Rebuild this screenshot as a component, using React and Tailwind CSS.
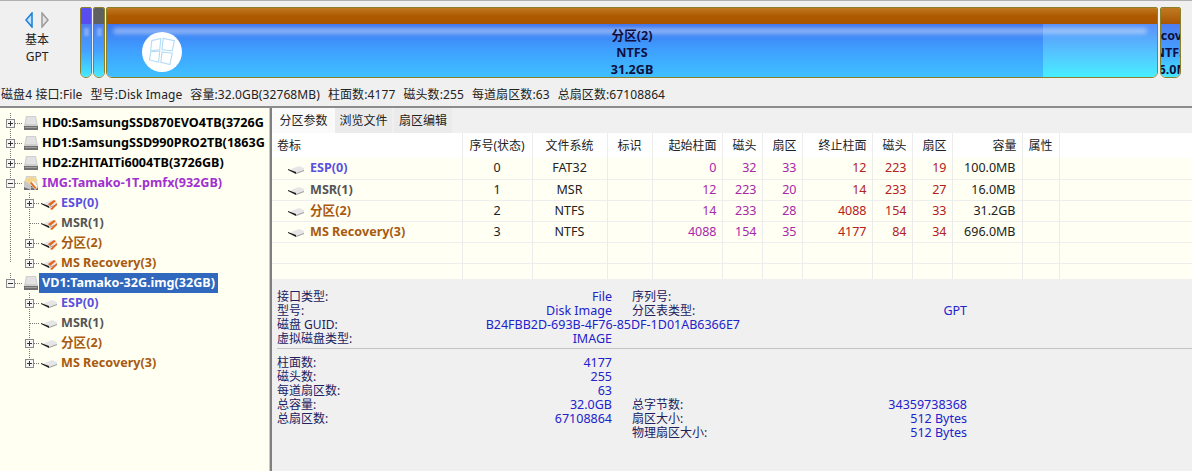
import React from "react";

const columns = [
  { label: "卷标", w: "w-[190px]", align: "text-left" },
  { label: "序号(状态)", w: "w-[70px]", align: "text-center" },
  { label: "文件系统", w: "w-[75px]", align: "text-center" },
  { label: "标识", w: "w-[45px]", align: "text-center" },
  { label: "起始柱面", w: "w-[70px]", align: "text-right" },
  { label: "磁头", w: "w-[40px]", align: "text-right" },
  { label: "扇区", w: "w-[40px]", align: "text-right" },
  { label: "终止柱面", w: "w-[70px]", align: "text-right" },
  { label: "磁头", w: "w-[40px]", align: "text-right" },
  { label: "扇区", w: "w-[40px]", align: "text-right" },
  { label: "容量", w: "w-[70px]", align: "text-right" },
  { label: "属性", w: "w-[37px]", align: "text-center" },
];

const volumes = [
  { name: "ESP(0)", color: "text-[#5a50e0]", idx: "0", fs: "FAT32", start: ["0", "32", "33"], end: ["12", "223", "19"], size: "100.0MB" },
  { name: "MSR(1)", color: "text-[#555555]", idx: "1", fs: "MSR", start: ["12", "223", "20"], end: ["14", "233", "27"], size: "16.0MB" },
  { name: "分区(2)", color: "text-[#a85a10]", idx: "2", fs: "NTFS", start: ["14", "233", "28"], end: ["4088", "154", "33"], size: "31.2GB" },
  { name: "MS Recovery(3)", color: "text-[#a85a10]", idx: "3", fs: "NTFS", start: ["4088", "154", "35"], end: ["4177", "84", "34"], size: "696.0MB" },
];

const infoTop = [
  ["接口类型:", "File", "序列号:", ""],
  ["型号:", "Disk Image", "分区表类型:", "GPT"],
];

const infoBottom = [
  ["柱面数:", "4177", "", ""],
  ["磁头数:", "255", "", ""],
  ["每道扇区数:", "63", "", ""],
  ["总容量:", "32.0GB", "总字节数:", "34359738368"],
  ["总扇区数:", "67108864", "扇区大小:", "512 Bytes"],
  ["", "", "物理扇区大小:", "512 Bytes"],
];

const HddIcon = ({ striped }) => (
  <svg width="16" height="16" viewBox="0 0 16 16" className="shrink-0">
    <path d="M3 1h10l2 10H1z" fill="#cfcfcf" />
    <path d="M4 2h8l1.5 7h-11z" fill="#e2e2e2" />
    <rect x="1" y="11" width="14" height="4" fill="#6f6f6f" />
    <rect x="2" y="12" width="12" height="1" fill="#a0a0a0" />
    {striped && (
      <g>
        <path d="M1 6l7-5 7 4-7 5z" fill="#f3d78c" />
        <path d="M1 6l7 4v5l-7-3z" fill="#c8c8c8" />
        <path d="M7 8l3-2 5 6-3 3z" fill="#fff8ec" />
        <path d="M7 8l1.500-1 5 6-1.500 1z" fill="#e8641c" />
      </g>
    )}
  </svg>
);

const PartIcon = ({ striped }) => (
  <svg width="18" height="14" viewBox="0 0 18 14" className="shrink-0">
    <path d="M4 7l8-3 5 2v3l-8 3z" fill="#e6e6e6" />
    <path d="M9 11l8-3v1l-8 3z" fill="#9c9c9c" />
    <path d="M1 7l8 3v2L1 8z" fill="#1c1c1c" />
    {striped && (
      <g>
        <path d="M8 8l6-4 2 1-6 5z" fill="#e8641c" />
        <path d="M10 13l7-6v2l-5 5z" fill="#e8641c" />
      </g>
    )}
  </svg>
);

const ExpandBox = ({ x, open }) => (
  <g>
    <rect x={x + 0.5} y="6.5" width="8" height="8" fill="#f4f4f4" stroke="#8a8a8a" />
    <path d={`M${x + 2} 10.5h5`} stroke="#333333" />
    {!open && <path d={`M${x + 4.5} 8v5`} stroke="#333333" />}
  </g>
);

// connector lines for one tree row, drawn per row so rows stay in normal flow
const Connector = ({ level, trunk, open, hasBox, last, branch }) => (
  <svg width={level === 0 ? 23 : 40} height="20" className="shrink-0">
    {trunk && (
      <path d={`M10.5 0V${last ? 10 : 20}`} stroke="#777777" strokeDasharray="1 1" />
    )}
    {level === 0 && <path d="M15 10.5h8" stroke="#777777" strokeDasharray="1 1" />}
    {level === 1 && branch && (
      <path d={`M29.5 0V${last ? 10 : 20}`} stroke="#777777" strokeDasharray="1 1" />
    )}
    {level === 1 && <path d="M30 10.5h10" stroke="#777777" strokeDasharray="1 1" />}
    {level === 0 ? <ExpandBox x={6} open={open} /> : hasBox && <ExpandBox x={25} open={false} />}
  </svg>
);

const DiskRow = ({ label, color = "text-black", open, striped, selected, last }) => (
  <div className="flex h-5 items-center">
    <Connector level={0} trunk open={open} last={last} />
    <HddIcon striped={striped} />
    <span
      className={`h-5 whitespace-nowrap px-[3px] text-[12.6px] font-bold leading-5 ${
        selected ? "bg-[#2f68bd] text-white" : color
      }`}
    >
      {label}
    </span>
  </div>
);

const PartRow = ({ vol, striped, trunk, last }) => (
  <div className="flex h-5 items-center">
    <Connector level={1} trunk={trunk} hasBox={!vol.name.startsWith("MSR")} branch last={last} />
    <PartIcon striped={striped} />
    <span className={`ml-[3px] text-[12.6px] font-bold ${vol.color}`}>{vol.name}</span>
  </div>
);

const InfoRow = ({ row }) => (
  <div className="flex h-[14px] items-center leading-[14px]">
    <div className="flex w-[335px] shrink-0 justify-between whitespace-nowrap">
      <span className="text-[#202060]">{row[0]}</span>
      <span className="text-[12.5px] text-[#2222cc]">{row[1]}</span>
    </div>
    <div className="ml-[20px] flex w-[335px] shrink-0 justify-between whitespace-nowrap">
      <span className="text-[#202060]">{row[2]}</span>
      <span className="text-[12.5px] text-[#2222cc]">{row[3]}</span>
    </div>
  </div>
);

// rows whose value runs past the first column
const WideInfoRow = ({ label, value, w }) => (
  <div className={`flex h-[14px] ${w} items-center justify-between whitespace-nowrap leading-[14px]`}>
    <span className="text-[#202060]">{label}</span>
    <span className="text-[12.5px] text-[#2222cc]">{value}</span>
  </div>
);

const SmallPartition = ({ top, w }) => (
  <div className={`flex h-[71px] ${w} shrink-0 flex-col overflow-hidden rounded-b-[6px] rounded-t-[2px] border border-[#8a7f2a]`}>
    <div className={`h-[16px] ${top}`} />
    <div className="flex flex-1 justify-center bg-gradient-to-b from-[#4d7df0] via-[#45a0ff] to-[#45eaff]">
      <div className="mt-[4px] h-[8px] w-[5px] bg-white/30 blur-[1px]" />
    </div>
  </div>
);

export default function App() {
  return (
    <div className="flex h-[471px] w-[1192px] flex-col overflow-hidden bg-[#f0f0f0] font-['Noto_Sans','Noto_Sans_CJK_SC',sans-serif] text-[12px] text-[#222222]">
      <div className="h-px bg-[#b0b0b0]" />

      {/* disk map */}
      <div className="flex h-[83px] items-start">
        <div className="flex w-[80px] shrink-0 flex-col items-center pr-[6px] pt-[10px]">
          <div className="flex h-[17px] items-center gap-[6px]">
            <svg width="10" height="16" viewBox="0 0 10 16">
              <path d="M8 1L2 8l6 7V1z" fill="#bfe4ff" stroke="#1b7fd6" strokeWidth="1.5" />
            </svg>
            <svg width="10" height="16" viewBox="0 0 10 16">
              <path d="M2 1l6 7-6 7V1z" fill="#e4e4e4" stroke="#9a9a9a" strokeWidth="1.5" />
            </svg>
          </div>
          <div className="mt-[3px] leading-[17px]">基本</div>
          <div className="leading-[17px]">GPT</div>
        </div>

        <div className="mt-[6px] flex gap-[1px]">
          <SmallPartition top="bg-[#5a4df0]" w="w-[12px]" />
          <SmallPartition top="bg-[#606060]" w="w-[12px]" />

          <div className="relative flex h-[71px] w-[1052px] shrink-0 flex-col overflow-hidden rounded-bl-[6px] rounded-br-[6px] rounded-t-[2px] border border-[#8a7f2a]">
            <div className="h-[16px] bg-gradient-to-b from-[#c07a20] via-[#ad5a00] to-[#a85500]" />
            <div className="flex flex-1">
              <div className="flex-1 bg-gradient-to-b from-[#3f74ee] via-[#3fa0ff] to-[#3fc0ff]" />
              <div className="w-[114px] bg-gradient-to-b from-[#5a90f8] via-[#55c0ff] to-[#45eeff]" />
            </div>
            <div className="absolute left-[6px] right-[10px] top-[20px] h-[6px] rounded-full bg-white/40 blur-[2px]" />
            <div className="absolute left-[35px] top-[24px] flex h-10 w-10 items-center justify-center rounded-full bg-white">
              <svg width="34" height="34" viewBox="0 0 30 30" fill="none" stroke="#b5dcf5" strokeWidth="1">
                <path d="M6 5l8-2-1 10-8 1z" />
                <path d="M16 3l10 2-2 9-9-1z" />
                <path d="M5 15l8-1-1 10-8-2z" />
                <path d="M15 15l9 1-2 10-8-2z" />
              </svg>
            </div>
            <div className="absolute inset-x-0 top-[19px] flex flex-col items-center text-[12.6px] font-bold leading-[17px] text-[#101040]">
              <span>分区(2)</span>
              <span>NTFS</span>
              <span>31.2GB</span>
            </div>
          </div>

          <div className="relative ml-[1px] flex h-[71px] w-[21px] shrink-0 flex-col overflow-hidden rounded-b-[6px] rounded-t-[2px] border border-[#8a7f2a]">
            <div className="h-[16px] bg-gradient-to-b from-[#c07a20] to-[#a85500]" />
            <div className="flex-1 bg-gradient-to-b from-[#4d7df0] via-[#45a0ff] to-[#45eaff]" />
            <div className="absolute left-1/2 top-[19px] flex w-[120px] -translate-x-1/2 flex-col items-center whitespace-nowrap text-[12.6px] font-bold leading-[17px] text-[#101040]">
              <span>MS Recovery(3)</span>
              <span>NTFS</span>
              <span>696.0MB</span>
            </div>
          </div>
        </div>
      </div>

      {/* status line */}
      <div className="flex h-[22px] items-center gap-[8px] whitespace-nowrap pl-[1px] tracking-[0.1px]">
        <span>磁盘4 接口:File</span>
        <span>型号:Disk Image</span>
        <span>容量:32.0GB(32768MB)</span>
        <span>柱面数:4177</span>
        <span>磁头数:255</span>
        <span>每道扇区数:63</span>
        <span>总扇区数:67108864</span>
      </div>

      <div className="flex min-h-0 flex-1 border-t-2 border-[#8c8c8c]">
        {/* tree */}
        <div className="w-[270px] shrink-0 overflow-hidden border-r border-[#c8c8c8] bg-[#fffff2] pt-[5px]">
          <DiskRow label="HD0:SamsungSSD870EVO4TB(3726G" />
          <DiskRow label="HD1:SamsungSSD990PRO2TB(1863G" />
          <DiskRow label="HD2:ZHITAITi6004TB(3726GB)" />
          <DiskRow label="IMG:Tamako-1T.pmfx(932GB)" color="text-[#a030d0]" open striped />
          {volumes.map((v, i) => (
            <PartRow key={v.name} vol={v} striped trunk last={i === 3} />
          ))}
          <DiskRow label="VD1:Tamako-32G.img(32GB)" open selected last />
          {volumes.map((v, i) => (
            <PartRow key={v.name} vol={v} last={i === 3} />
          ))}
        </div>
        <div className="w-[2px] shrink-0 bg-[#808080]" />

        {/* right side */}
        <div className="flex min-w-0 flex-1 flex-col">
          <div className="flex h-[25px] shrink-0 items-stretch">
            <div className="flex w-[63px] items-center justify-center bg-[#fafafa]">分区参数</div>
            <div className="flex w-[57px] items-center justify-center bg-[#ebebeb]">浏览文件</div>
            <div className="ml-[2px] flex w-[58px] items-center justify-center bg-[#ebebeb]">扇区编辑</div>
          </div>

          <div className="h-[146px] shrink-0 overflow-hidden bg-[#fffff4]">
            <table className="w-full table-fixed border-collapse">
              <colgroup>
                {columns.map((c, i) => (
                  <col key={i} className={c.w} />
                ))}
                <col />
              </colgroup>
              <thead>
                <tr className="h-[25px] bg-white">
                  {columns.map((c, i) => (
                    <th key={i} className={`border-r border-[#ececec] px-[5px] font-normal ${c.align}`}>
                      {c.label}
                    </th>
                  ))}
                  <th />
                </tr>
              </thead>
              <tbody className="text-[12.5px]">
                {volumes.map((v) => (
                  <tr key={v.name} className="h-[21px] border-b border-[#eeeeee] [&>td]:pt-px">
                    <td className="border-r border-[#ececec] pl-[15px]">
                      <div className="flex items-center">
                        <PartIcon />
                        <span className={`ml-[5px] whitespace-nowrap text-[12.6px] font-bold ${v.color}`}>{v.name}</span>
                      </div>
                    </td>
                    <td className="border-r border-[#ececec] text-center">{v.idx}</td>
                    <td className="border-r border-[#ececec] text-center">{v.fs}</td>
                    <td className="border-r border-[#ececec]" />
                    {v.start.map((n, i) => (
                      <td key={i} className="border-r border-[#ececec] pr-[5px] text-right text-[#a828a8]">{n}</td>
                    ))}
                    {v.end.map((n, i) => (
                      <td key={i} className="border-r border-[#ececec] pr-[5px] text-right text-[#b42020]">{n}</td>
                    ))}
                    <td className="border-r border-[#ececec] pr-[6px] text-right">{v.size}</td>
                    <td className="border-r border-[#ececec]" />
                    <td />
                  </tr>
                ))}
                {[0, 1].map((n) => (
                  <tr key={n} className="h-[21px] border-b border-[#eeeeee]">
                    {columns.map((c, i) => (
                      <td key={i} className="border-r border-[#ececec]" />
                    ))}
                    <td />
                  </tr>
                ))}
              </tbody>
            </table>
          </div>

          {/* disk details */}
          <div className="pl-[5px] pt-[11px]">
            {infoTop.map((row, i) => (
              <InfoRow key={i} row={row} />
            ))}
            <WideInfoRow label="磁盘 GUID:" value="B24FBB2D-693B-4F76-85DF-1D01AB6366E7" w="w-[463px]" />
            <WideInfoRow label="虚拟磁盘类型:" value="IMAGE" w="w-[335px]" />
          </div>
          <div className="ml-[5px] mt-[2px] h-px bg-[#c4c4c4]" />
          <div className="pl-[5px] pt-[7px]">
            {infoBottom.map((row, i) => (
              <InfoRow key={i} row={row} />
            ))}
          </div>
        </div>
      </div>
    </div>
  );
}
